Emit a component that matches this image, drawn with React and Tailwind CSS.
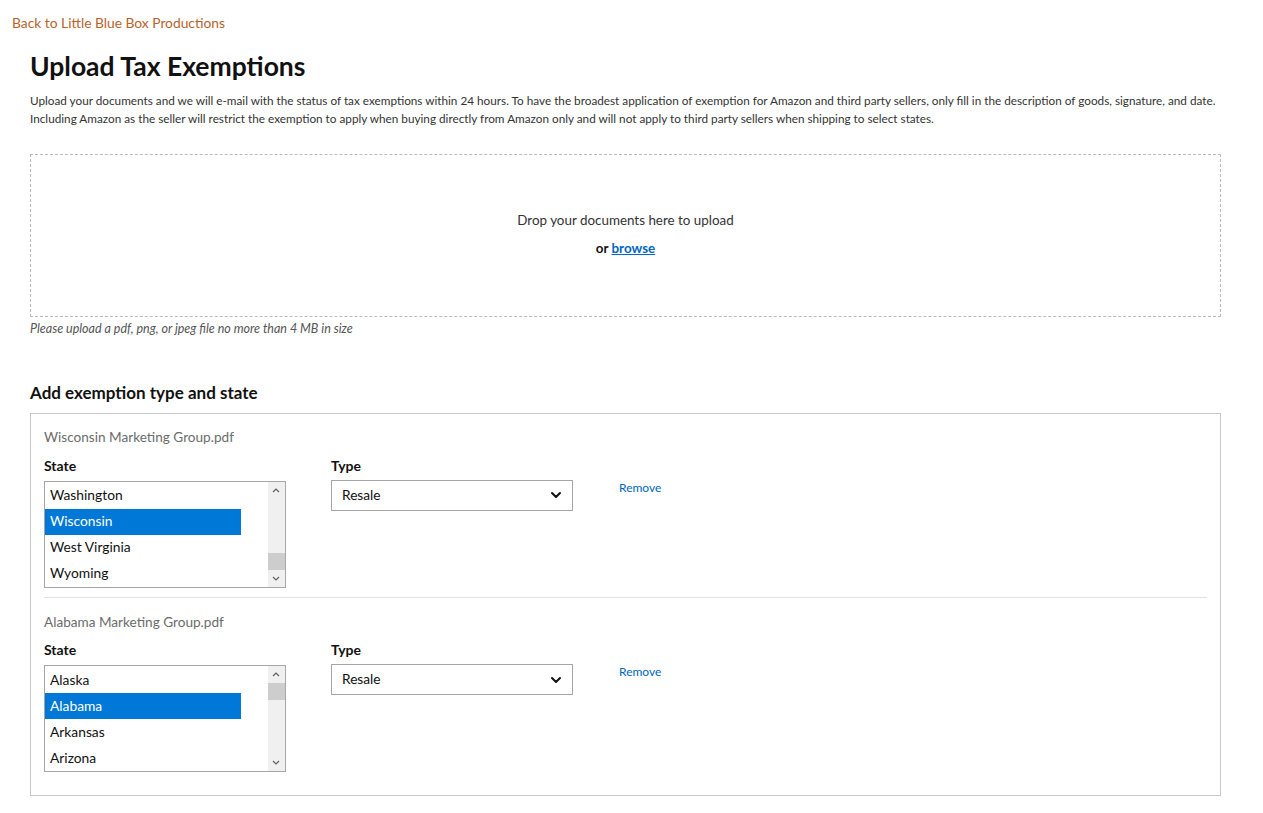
import { ChevronDown } from 'lucide-react';

const font = { fontFamily: 'Lato, "Liberation Sans", sans-serif' };

function ListBox({ items, selected, thumbTop }) {
  return (
    <div className="w-[242px] h-[107px] border border-[#a6a6a6] bg-white flex">
      <div className="flex-1 pt-[1px]">
        {items.map((s) => (
          <div
            key={s}
            className={
              'h-[26px] flex items-center pl-[5px] text-[13.8px] w-[196px] ' +
              (s === selected ? 'bg-[#0078d7] text-white' : 'text-[#111]')
            }
          >
            {s}
          </div>
        ))}
      </div>
      <div className="w-[17px] bg-[#f0f0f0] relative">
        <svg className="absolute top-[5px] left-[4px]" width="8" height="6" viewBox="0 0 8 6">
          <path d="M1 5 L4 2 L7 5" fill="none" stroke="#606060" strokeWidth="1.2" />
        </svg>
        <div className="absolute left-0 w-full h-[17px] bg-[#cdcdcd]" style={{ top: thumbTop }} />
        <svg className="absolute bottom-[5px] left-[4px]" width="8" height="6" viewBox="0 0 8 6">
          <path d="M1 1 L4 4 L7 1" fill="none" stroke="#606060" strokeWidth="1.2" />
        </svg>
      </div>
    </div>
  );
}

function Row({ file, items, selected, thumbTop }) {
  return (
    <div>
      <div className="text-[13.6px] text-[#6c6c6c] mb-[7px]">{file}</div>
      <div className="flex">
        <div className="w-[287px]">
          <div className="text-[14px] font-bold text-[#111] mb-[5px]">State</div>
          <ListBox items={items} selected={selected} thumbTop={thumbTop} />
        </div>
        <div className="w-[288px]">
          <div className="text-[14px] font-bold text-[#111] mb-[4px]">Type</div>
          <div className="w-[242px] h-[31px] border border-[#a6a6a6] flex items-center justify-between pl-[10px] pr-[8px] text-[13.7px] text-[#111]">
            <span>Resale</span>
            <ChevronDown size={16} strokeWidth={3} />
          </div>
        </div>
        <div className="pt-[24px] text-[12px] text-[#0066c0]">Remove</div>
      </div>
    </div>
  );
}

export default function App() {
  return (
    <div className="min-h-screen bg-white" style={font}>
      <div className="px-[12px] pt-[10px]">
        <a className="text-[13.8px] text-[#b5642e]">Back to Little Blue Box Productions</a>
      </div>
      <div className="pl-[30px] w-[1221px]">
        <h1 className="mt-[16px] text-[26.5px] font-bold text-[#111] leading-[32px]">Upload Tax Exemptions</h1>
        <p className="mt-[10px] text-[11.75px] leading-[18px] text-[#333]">
          Upload your documents and we will e-mail with the status of tax exemptions within 24 hours. To have the broadest application of exemption for Amazon and third party sellers, only fill in the description of goods, signature, and date. Including Amazon as the seller will restrict the exemption to apply when buying directly from Amazon only and will not apply to third party sellers when shipping to select states.
        </p>
        <div className="mt-[26px] w-[1191px] h-[163px] border border-dashed border-[#bbb] flex flex-col items-center pt-[55px]">
          <div className="text-[13.4px] text-[#333]">Drop your documents here to upload</div>
          <div className="mt-[8px] text-[13.4px] font-bold text-[#111]">
            or <span className="text-[#0066c0] underline">browse</span>
          </div>
        </div>
        <div className="mt-[3px] text-[12.5px] italic text-[#555]">Please upload a pdf, png, or jpeg file no more than 4 MB in size</div>
        <h2 className="mt-[41px] text-[17px] font-bold text-[#111]">Add exemption type and state</h2>
        <div className="mt-[8px] w-[1191px] border border-[#c8c8c8] px-[13px] pt-[13px] pb-[23px]">
          <Row file="Wisconsin Marketing Group.pdf" items={['Washington', 'Wisconsin', 'West Virginia', 'Wyoming']} selected="Wisconsin" thumbTop={71} />
          <div className="border-t border-[#e3e3e3] mt-[9px] mb-[14px]" />
          <Row file="Alabama Marketing Group.pdf" items={['Alaska', 'Alabama', 'Arkansas', 'Arizona']} selected="Alabama" thumbTop={17} />
        </div>
      </div>
    </div>
  );
}
